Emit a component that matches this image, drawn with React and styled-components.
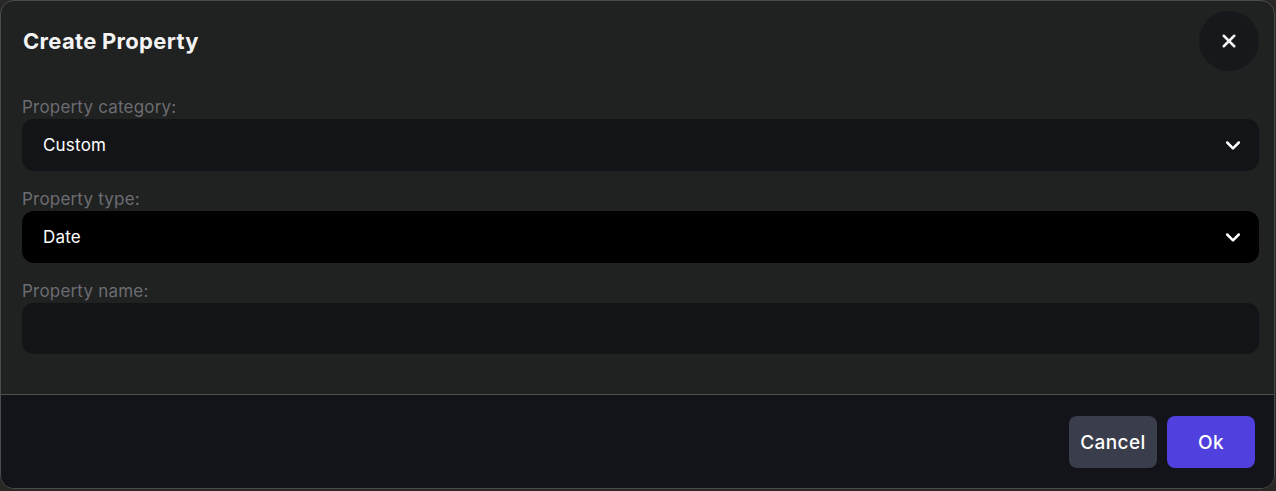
import React from 'react'
import styled, { createGlobalStyle } from 'styled-components'

const GlobalStyle = createGlobalStyle`
  html, body {
    margin: 0;
    padding: 0;
    background: #2a2826;
    font-family: Inter, "Open Sans", "Liberation Sans", sans-serif;
  }
`

const Chevron = () => (
  <svg width="20" height="20" viewBox="0 0 24 24" fill="none" stroke="#fff" strokeWidth="3" strokeLinecap="round" strokeLinejoin="round">
    <path d="M5 9l7 7 7-7" />
  </svg>
)

const CloseIcon = () => (
  <svg width="18" height="18" viewBox="0 0 24 24" fill="none" stroke="#f2f2f2" strokeWidth="3.4" strokeLinecap="round">
    <path d="M5 5l14 14M19 5L5 19" />
  </svg>
)

const App = () => {
  return (
    <>
      <GlobalStyle />
      <Dialog>
        <Header>
          <Title>Create Property</Title>
          <CloseButton aria-label="Close"><CloseIcon /></CloseButton>
        </Header>
        <Body>
          <Field>
            <Label>Property category:</Label>
            <Select>
              <span>Custom</span>
              <Chevron />
            </Select>
          </Field>
          <Field>
            <Label>Property type:</Label>
            <Select $focused>
              <span>Date</span>
              <Chevron />
            </Select>
          </Field>
          <Field>
            <Label>Property name:</Label>
            <Input />
          </Field>
        </Body>
        <Footer>
          <Button $variant="secondary">Cancel</Button>
          <Button $variant="primary">Ok</Button>
        </Footer>
      </Dialog>
    </>
  )
}

const Dialog = styled.div`
width: 1275px;
height: 489px;
box-sizing: border-box;
border: 1px solid #4b4b4b;
border-radius: 14px;
background: #202121;
overflow: hidden;
display: flex;
flex-direction: column;
`

const Header = styled.div`
display: flex;
align-items: center;
justify-content: space-between;
padding: 10px 15px 0 22px;
height: 60px;
`

const Title = styled.h2`
margin: 0;
font-size: 22px;
font-weight: 700;
color: #f3f3f3;
letter-spacing: 0.3px;
`

const CloseButton = styled.button`
width: 60px;
height: 60px;
border-radius: 50%;
border: none;
background: #17181c;
display: flex;
align-items: center;
justify-content: center;
padding: 0;
cursor: pointer;
`

const Body = styled.div`
flex: 1;
display: flex;
flex-direction: column;
gap: 17px;
padding: 25px 15px 0 21px;
`

const Field = styled.div`
display: flex;
flex-direction: column;
`

const Label = styled.label`
font-size: 17px;
line-height: 22px;
color: #6c6d72;
letter-spacing: 0.2px;
margin-bottom: 1px;
`

const Select = styled.div`
height: 52px;
box-sizing: border-box;
border-radius: 12px;
background: ${p => (p.$focused ? '#000000' : '#131418')};
display: flex;
align-items: center;
justify-content: space-between;
padding: 0 16px 0 21px;
font-size: 17px;
letter-spacing: 0.2px;
color: #ffffff;
`

const Input = styled.input`
height: 51px;
box-sizing: border-box;
border: none;
outline: none;
border-radius: 12px;
background: #131418;
color: #fff;
font-size: 17px;
padding: 0 20px;
`

const Footer = styled.div`
height: 94px;
box-sizing: border-box;
border-top: 1px solid #4e4e4e;
background: #131419;
display: flex;
justify-content: flex-end;
align-items: flex-start;
gap: 10px;
padding: 21px 19px 0 0;
`

const Button = styled.button`
width: 88px;
height: 52px;
border: none;
border-radius: 8px;
font-family: inherit;
font-size: 19px;
font-weight: 500;
letter-spacing: 0.4px;
color: #fff;
cursor: pointer;
background: ${p => (p.$variant === 'primary' ? '#5040dd' : '#3a3d4b')};
`

export default App
